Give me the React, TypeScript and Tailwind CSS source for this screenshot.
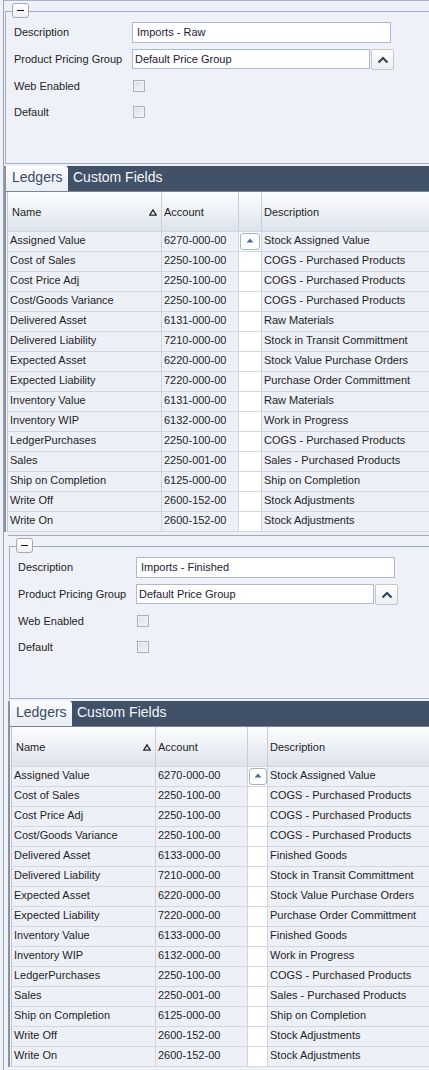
import React from "react";

type Row = [string, string, string];

const rows1: Row[] = [
  ["Assigned Value", "6270-000-00", "Stock Assigned Value"],
  ["Cost of Sales", "2250-100-00", "COGS - Purchased Products"],
  ["Cost Price Adj", "2250-100-00", "COGS - Purchased Products"],
  ["Cost/Goods Variance", "2250-100-00", "COGS - Purchased Products"],
  ["Delivered Asset", "6131-000-00", "Raw Materials"],
  ["Delivered Liability", "7210-000-00", "Stock in Transit Committment"],
  ["Expected Asset", "6220-000-00", "Stock Value Purchase Orders"],
  ["Expected Liability", "7220-000-00", "Purchase Order Committment"],
  ["Inventory Value", "6131-000-00", "Raw Materials"],
  ["Inventory WIP", "6132-000-00", "Work in Progress"],
  ["LedgerPurchases", "2250-100-00", "COGS - Purchased Products"],
  ["Sales", "2250-001-00", "Sales - Purchased Products"],
  ["Ship on Completion", "6125-000-00", "Ship on Completion"],
  ["Write Off", "2600-152-00", "Stock Adjustments"],
  ["Write On", "2600-152-00", "Stock Adjustments"],
];

const rows2: Row[] = rows1.map((r) =>
  r[0] === "Delivered Asset" || r[0] === "Inventory Value"
    ? [r[0], "6133-000-00", "Finished Goods"]
    : r
);

function Checkbox() {
  return (
    <div className="ml-[1px] h-[12px] w-[12px] border border-[#a7b2c5] bg-linear-to-br from-[#d9dde4] to-[#f6f7f9] shadow-[inset_0_0_0_1px_#eef0f3]" />
  );
}

type SectionProps = {
  rows: Row[];
  desc: string;
  nameW: string;
  accW: string;
  smallW: string;
  btnW: string;
  topBorder: string;
};

function Section({ rows, desc, nameW, accW, smallW, btnW, topBorder }: SectionProps) {
  return (
    <div className={`h-[535px] overflow-hidden border-t ${topBorder}`}>
      {/* group box */}
      <div className="relative ml-[1px] mt-[10px] h-[153px] border-b border-l border-t border-[#a2aec5]">
        <div className="absolute left-[6px] top-[-9px] flex h-[15px] w-[17px] items-center justify-center rounded-[3px] border border-[#a6a9ae] bg-linear-to-b from-white to-[#eef0f2]">
          <div className="h-[1px] w-[7px] bg-[#111111]" />
        </div>

        <div className="mt-[10px] flex h-[21px] items-center">
          <div className="w-[126px] pl-[8px] text-[11px] text-[#1e1e1e]">Description</div>
          <div className="flex h-[21px] w-[259px] items-center border border-[#abb9d3] bg-white pl-[4px] text-[11px] text-[#1d1a38]">
            {desc}
          </div>
        </div>

        <div className="mt-[6px] flex h-[21px] items-start">
          <div className="flex h-[20px] w-[126px] items-center pl-[8px] text-[11px] text-[#1e1e1e]">
            Product Pricing Group
          </div>
          <div className="flex h-[20px] w-[238px] items-center border border-[#abb9d3] bg-white pl-[2px] text-[11px] text-[#1d1a38]">
            Default Price Group
          </div>
          <div className="ml-[1px] flex h-[21px] w-[23px] items-center justify-center rounded-[2px] border border-[#c5c8ce] bg-linear-to-b from-white to-[#eceef1]">
            <svg width="12" height="8" viewBox="0 0 12 8">
              <path d="M1.5 6.5 L6 2 L10.5 6.5" stroke="#34455a" strokeWidth="2.2" fill="none" />
            </svg>
          </div>
        </div>

        <div className="mt-[7px] flex h-[18px] items-center">
          <div className="w-[126px] pl-[8px] text-[11px] text-[#1e1e1e]">Web Enabled</div>
          <Checkbox />
        </div>

        <div className="mt-[8px] flex h-[18px] items-center">
          <div className="w-[126px] pl-[8px] text-[11px] text-[#1e1e1e]">Default</div>
          <Checkbox />
        </div>
      </div>

      {/* tabs + grid */}
      <div className="mt-[2px] border-l-2 border-[#8a939f]">
        <div className="flex h-[25px] bg-[#415168]">
          <div className="flex w-[62px] items-center rounded-tr-[3px] bg-linear-to-b from-[#fbfcfe] to-[#e8edf5] pb-[2px] pl-[6px] text-[14px] text-[#3a4a5f]">
            Ledgers
          </div>
          <div className="flex items-center pb-[2px] pl-[5px] text-[14px] text-[#f4f6f9]">Custom Fields</div>
        </div>
        <div className="h-[1px] bg-[#7c8591]" />

        <div className="ml-[1px] border-l border-[#c5cbd5]">
          {/* header */}
          <div className="flex h-[40px] border-b border-[#d2d7df] bg-linear-to-b from-[#fcfdfe] to-[#dde3ed] text-[11px] text-[#1e1e1e]">
            <div className={`${nameW} flex shrink-0 items-center border-r border-[#c8cdd7] pl-[4px] pt-[1px]`}>
              <span>Name</span>
              <svg className="ml-auto mr-[4px]" width="8" height="7" viewBox="0 0 8 7">
                <path d="M4 0.8 L7.3 6.2 L0.7 6.2 Z" stroke="#2b2b2b" strokeWidth="1.3" fill="none" />
              </svg>
            </div>
            <div className={`${accW} flex shrink-0 items-center border-r border-[#c8cdd7] pl-[2px] pt-[1px]`}>
              Account
            </div>
            <div className={`${smallW} shrink-0 border-r border-[#c8cdd7]`} />
            <div className="flex flex-1 items-center pl-[2px] pt-[1px]">Description</div>
          </div>

          {rows.map((r, i) => (
            <div
              key={i}
              className="flex h-[20px] border-b border-[#d3d7de] bg-[#edf0f7] text-[11px] text-[#1e1e1e]"
            >
              <div className={`${nameW} flex shrink-0 items-center whitespace-nowrap border-r border-[#d0d4dc] pb-[2px] pl-[2px]`}>
                {r[0]}
              </div>
              <div className={`${accW} flex shrink-0 items-center whitespace-nowrap border-r border-[#d0d4dc] pb-[2px] pl-[2px]`}>
                {r[1]}
              </div>
              <div className={`${smallW} shrink-0 border-r border-[#d0d4dc] bg-white`}>
                {i === 0 && (
                  <div className={`${btnW} ml-[1px] mt-[1px] flex h-[17px] items-center justify-center rounded-[3px] border border-[#aab3c2] bg-white pb-[2px]`}>
                    <svg width="8" height="5" viewBox="0 0 8 5">
                      <path d="M4 0.5 L7.5 4.5 L0.5 4.5 Z" fill="#4a6b9c" />
                    </svg>
                  </div>
                )}
              </div>
              <div className="flex flex-1 items-center whitespace-nowrap pb-[2px] pl-[2px]">{r[2]}</div>
            </div>
          ))}
        </div>
      </div>
    </div>
  );
}

export default function App() {
  return (
    <div className="h-[1070px] w-[429px] overflow-hidden bg-[#eef1f8] pl-[3px] font-['Liberation_Sans',Arial,sans-serif]">
      <div className="h-full border-l border-[#9aa3b0]">
        <Section
          rows={rows1}
          desc="Imports - Raw"
          nameW="w-[154px]"
          accW="w-[77px]"
          smallW="w-[23px]"
          btnW="w-[20px]"
          topBorder="border-[#a9b4c6]"
        />
        <div className="ml-[4px]">
          <Section
            rows={rows2}
            desc="Imports - Finished"
            nameW="w-[144px]"
            accW="w-[92px]"
            smallW="w-[20px]"
            btnW="w-[18px]"
            topBorder="border-[#a3abb8]"
          />
        </div>
      </div>
    </div>
  );
}
